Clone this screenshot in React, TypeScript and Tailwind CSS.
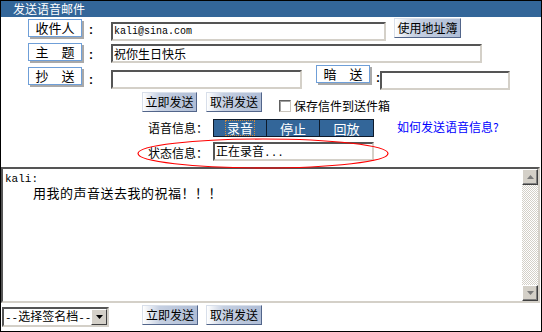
import React from "react";

type P = { children?: React.ReactNode; className?: string };

function Label({ children, className = "" }: P) {
  return (
    <div
      className={`w-[54px] h-[18px] shrink-0 border border-[#6f9fd8] bg-white shadow-[2px_2px_0_#a9a9a9] flex items-center justify-center text-[13px] leading-[16px] text-black ${className}`}
    >
      {children}
    </div>
  );
}

function Colon({ className = "" }: P) {
  return (
    <span
      className={`w-[4px] shrink-0 text-[12px] leading-[12px] font-bold font-['Liberation_Sans',sans-serif] text-black ${className}`}
    >
      :
    </span>
  );
}

function Btn({ children, className = "" }: P) {
  return (
    <div
      className={`h-[20px] shrink-0 flex items-center justify-center text-[12px] leading-[14px] text-black border border-t-[#d8dfea] border-l-[#d8dfea] border-r-[#52658a] border-b-[#52658a] bg-[image:linear-gradient(to_right,#ffffff,#c6d0e2_30%,#afbdd6)] ${className}`}
    >
      {children}
    </div>
  );
}

function Field({ children, className = "" }: P) {
  return (
    <div
      className={`h-[19px] shrink-0 bg-white border-2 border-t-[#555555] border-l-[#555555] border-r-[#d4d0c8] border-b-[#d4d0c8] flex items-center pl-[1px] overflow-hidden whitespace-pre ${className}`}
    >
      <span>{children}</span>
    </div>
  );
}

function Arrow({ up }: { up?: boolean }) {
  return (
    <svg width="7" height="4" viewBox="0 0 7 4">
      <path d={up ? "M0 4 L3.5 0 L7 4 Z" : "M0 0 L7 0 L3.5 4 Z"} fill="#7a7a7a" />
    </svg>
  );
}

function SBtn({ up }: { up?: boolean }) {
  return (
    <div className="h-[16px] shrink-0 bg-[#d4d0c8] border border-t-[#ffffff] border-l-[#ffffff] border-r-[#404040] border-b-[#404040] shadow-[inset_-1px_-1px_0_#808080] flex items-center justify-center">
      <Arrow up={up} />
    </div>
  );
}

export default function App() {
  return (
    <div className="relative w-[542px] h-[332px] border border-black bg-white overflow-hidden flex flex-col font-['Noto_Sans_CJK_SC',sans-serif] text-[12px] text-black">
      {/* title */}
      <div className="h-[16px] shrink-0 bg-[#336699] text-white text-[12px] leading-[15px] pl-[12px]">
        发送语音邮件
      </div>

      {/* row 1 */}
      <div className="h-[25px] shrink-0 flex items-start">
        <Label className="ml-[27px] mt-[2px]">收件人</Label>
        <Colon className="ml-[7px] mt-[7px]" />
        <Field className="ml-[18px] mt-[5px] w-[275px] font-['Liberation_Mono',monospace] text-[10px] leading-[12px]">
          kali@sina.com
        </Field>
        <Btn className="ml-[8px] mt-[1px] w-[67px] border-t-[#8a98b4] border-l-[#8a98b4]">使用地址簿</Btn>
      </div>

      {/* row 2 */}
      <div className="h-[23px] shrink-0 flex items-start">
        <Label className="ml-[27px] mt-[1px]">主　题</Label>
        <Colon className="ml-[7px] mt-[7px]" />
        <Field className="ml-[18px] mt-[2px] w-[371px] text-[12px] leading-[14px]">祝你生日快乐</Field>
      </div>

      {/* row 3 */}
      <div className="h-[25px] shrink-0 flex items-start">
        <Label className="ml-[27px] mt-[2px]">抄　送</Label>
        <Colon className="ml-[7px] mt-[9px]" />
        <Field className="ml-[18px] mt-[5px] w-[191px]" />
        <Label className="ml-[14px] mt-0">暗　送</Label>
        <Colon className="ml-[6px] mt-[7px]" />
        <Field className="mt-[6px] w-[130px]" />
      </div>

      {/* row 4 */}
      <div className="h-[24px] shrink-0 flex items-start">
        <Btn className="ml-[141px] mt-[2px] w-[55px]">立即发送</Btn>
        <Btn className="ml-[9px] mt-[2px] w-[56px]">取消发送</Btn>
        <div className="ml-[17px] mt-[10px] w-[12px] h-[12px] bg-white border border-t-[#606060] border-l-[#606060] border-r-[#c8c4bc] border-b-[#c8c4bc] shadow-[inset_1px_1px_0_#a0a0a0]" />
        <span className="ml-[3px] mt-[9px] text-[12px] leading-[14px]">保存信件到送件箱</span>
      </div>

      {/* row 5 */}
      <div className="h-[26px] shrink-0 flex items-start">
        <span className="ml-[147px] mt-[7px] text-[12px] leading-[14px]">语音信息：</span>
        <div className="ml-[5px] mt-[5px] h-[18px] w-[161px] flex border border-[#0d1a2b] bg-[#336699] text-white text-[13px] leading-[15px]">
          <div className="w-[53px] flex items-center justify-center border-r border-[#0d1a2b]">
            <span className="border border-dotted border-[#d08a3c] px-[1px] leading-[14px]">录音</span>
          </div>
          <div className="w-[53px] flex items-center justify-center border-r border-[#0d1a2b]">停止</div>
          <div className="flex-1 flex items-center justify-center">回放</div>
        </div>
        <span className="ml-[23px] mt-[6px] text-[12px] leading-[14px] text-[#0000ff]">如何发送语音信息?</span>
      </div>

      {/* row 6 */}
      <div className="h-[27px] shrink-0 flex items-start">
        <span className="ml-[147px] mt-[6px] text-[12px] leading-[14px]">状态信息：</span>
        <Field className="ml-[5px] mt-[2px] w-[161px] text-[12px] leading-[14px]">
          正在录音<span className="font-['Liberation_Mono',monospace] text-[11px]">...</span>
        </Field>
      </div>

      {/* textarea */}
      <div className="h-[136px] shrink-0 w-[539px] flex border-2 border-t-[#555555] border-l-[#555555] border-r-[#d4d0c8] border-b-[#d4d0c8] bg-white">
        <div className="flex-1 pl-[2px] pt-[3px] whitespace-pre text-[13px] leading-[14px]">
          <div className="text-[11px] font-['Liberation_Mono',monospace]">kali:</div>
          <div className="pl-[28px] tracking-[0.5px]">用我的声音送去我的祝福！！！</div>
        </div>
        <div className="w-[16px] flex flex-col">
          <SBtn up />
          <div className="flex-1 bg-[image:repeating-conic-gradient(#d4d0c8_0%_25%,#ffffff_0%_50%)] bg-[length:2px_2px]" />
          <SBtn />
        </div>
      </div>

      {/* bottom row */}
      <div className="h-[28px] shrink-0 flex items-start">
        <div className="ml-[1px] mt-[4px] w-[107px] h-[20px] bg-white border-2 border-t-[#555555] border-l-[#555555] border-r-[#d4d0c8] border-b-[#d4d0c8] flex items-center">
          <span className="flex-1 pl-[1px] text-[12px] leading-[14px] whitespace-pre">
            <span className="font-['Liberation_Mono',monospace] text-[11px]">--</span>选择签名档
            <span className="font-['Liberation_Mono',monospace] text-[11px]">--</span>
          </span>
          <div className="w-[16px] h-full bg-[#d4d0c8] border border-t-[#ffffff] border-l-[#ffffff] border-r-[#404040] border-b-[#404040] flex items-center justify-center">
            <svg width="7" height="4" viewBox="0 0 7 4">
              <path d="M0 0 L7 0 L3.5 4 Z" fill="#000000" />
            </svg>
          </div>
        </div>
        <Btn className="ml-[33px] mt-[2px] w-[56px]">立即发送</Btn>
        <Btn className="ml-[8px] mt-[2px] w-[56px]">取消发送</Btn>
      </div>

      {/* red ellipse highlight */}
      <svg
        className="absolute left-[135px] top-[136px] pointer-events-none"
        width="254"
        height="33"
        viewBox="0 0 254 33"
      >
        <ellipse cx="127" cy="16.5" rx="125" ry="14.5" fill="none" stroke="#ff0000" strokeWidth="1.2" />
      </svg>
    </div>
  );
}
